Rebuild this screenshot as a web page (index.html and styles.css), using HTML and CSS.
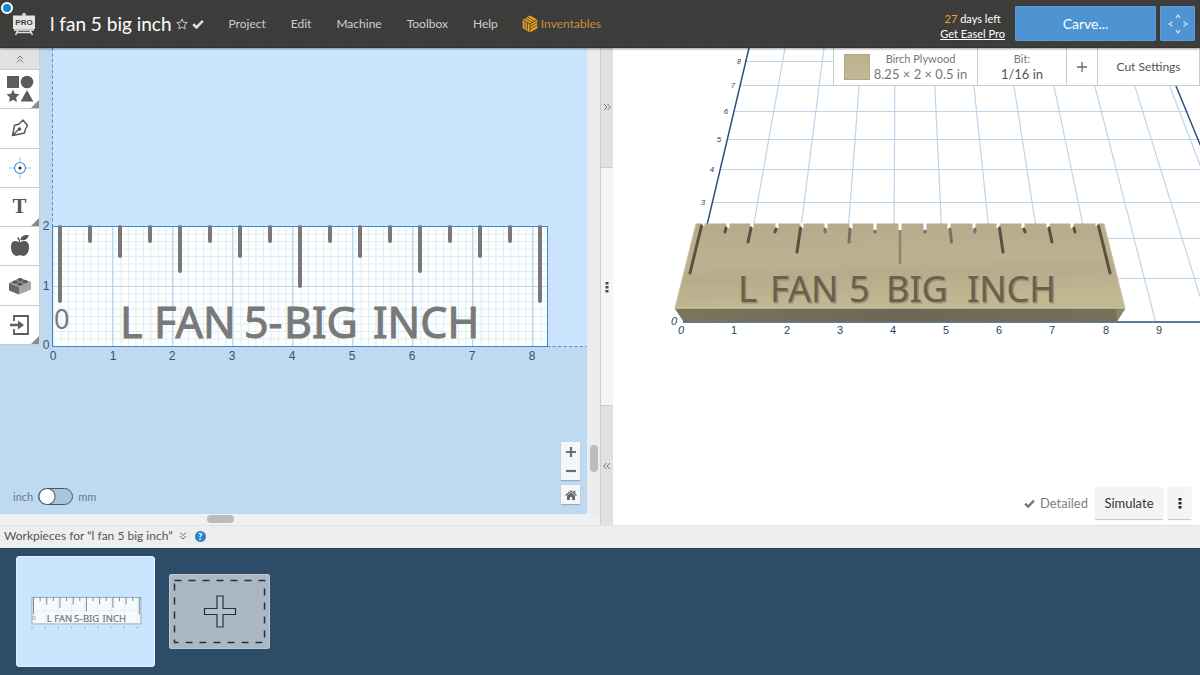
FILE: index.html
```html
<!DOCTYPE html>
<html lang="en">
<head>
<meta charset="utf-8">
<meta name="viewport" content="width=device-width, initial-scale=1">
<title>l fan 5 big inch</title>
<link rel="stylesheet" href="styles.css">
</head>
<body>
<header class="topbar">
  <span class="status-dot"></span>
  <a class="logo" href="#" aria-label="Home">
    <svg width="24" height="24" viewBox="0 0 24 24"><path d="M11 4V2.500a1 1 0 0 1 2 0V4M6 18l-2.500 5M18 18l2.500 5M5 20.500h14" fill="none" stroke="#e2e2e2" stroke-width="1.600"/><rect x="1" y="3.500" width="22" height="13.500" fill="#e4e4e2"/><path d="M2 18h20" stroke="#e2e2e2" stroke-width="1.600"/><text x="12" y="12.500" class="logo-text" text-anchor="middle">PRO</text></svg>
  </a>
  <h1 class="title">l fan 5 big inch</h1>
  <div class="title-icons">
    <svg width="12" height="12" viewBox="0 0 12 12"><path d="M6 .9l1.500 3.400 3.700.4-2.800 2.500.8 3.700L6 9 2.800 10.900l.8-3.700L.8 4.700l3.700-.4z" fill="none" stroke="#c8c8c8" stroke-width="1"/></svg>
    <svg width="12" height="12" viewBox="0 0 12 12"><path d="M1.200 6.200l3.300 3.200 6.300-6.500" fill="none" stroke="#ddd" stroke-width="2.600"/></svg>
  </div>
  <nav class="menu">
    <a href="#">Project</a><a href="#">Edit</a><a href="#">Machine</a><a href="#">Toolbox</a><a href="#">Help</a>
    <a href="#" class="inventables"><svg width="16" height="18" viewBox="0 0 16 18"><path d="M8 .5l7.300 4.200v8.600L8 17.500.7 13.300V4.700z" fill="#eea320"/><path d="M8 9v8.500M8 9L.7 4.700M8 9l7.300-4.300M3 3.400l7.300 4.200M5.300 2l7.300 4.200M3 6.500v7.500M5.400 7.800v7.500M8 11.500l7-4M8 14.200l7-4" fill="none" stroke="#4b4230" stroke-width=".9"/></svg>Inventables</a>
  </nav>
  <div class="trial"><span><b>27</b> days left</span><a href="#">Get Easel Pro</a></div>
  <button class="btn-carve" type="button">Carve...</button>
  <button class="btn-jog" type="button" aria-label="Jog machine"><svg width="20" height="20" viewBox="0 0 20 20"><path d="M8 4l2-3 2 3M8 16l2 3 2-3M4.500 7.800L1 10l3.500 2.200M15.500 7.800L19 10l-3.500 2.200" fill="none" stroke="#d5e9fa" stroke-width="1.200"/></svg></button>
</header>

<main class="workspace">
  <section class="editor">
    <div class="canvas">
      <svg class="canvas-art" width="100%" height="100%">
        <defs>
          <pattern id="minor" x="53" y="226" width="7.500" height="7.500" patternUnits="userSpaceOnUse"><path d="M0 .5H7.500M.5 0V7.500" stroke="#dfedf4" stroke-width="1"/></pattern>
          <g id="ruler">
            <g stroke="#797979" stroke-width="4" stroke-linecap="round">
              <path d="M60 227V301M540 227V301M300 227V286M180 227V271M420 227V271M120 227V256M240 227V256M360 227V256M480 227V256"/>
              <path d="M90 227V241M150 227V241M210 227V241M270 227V241M330 227V241M390 227V241M450 227V241M510 227V241"/>
            </g>
            <g class="engraving">
              <text x="54" y="329" class="engraving-zero">0</text>
              <text y="338"><tspan x="120">L</tspan><tspan x="154">FAN</tspan><tspan x="244">5-</tspan><tspan x="284">BIG</tspan><tspan x="373">INCH</tspan></text>
            </g>
          </g>
        </defs>
        <g transform="translate(0 -48)">
          <rect x="53" y="48" width="100%" height="298" fill="#cce5fe"/>
          <rect x="53" y="226" width="494" height="120" fill="#fdfefe"/>
          <rect x="53" y="226" width="494" height="120" fill="url(#minor)"/>
          <path d="M112.500 227V346M172.500 227V346M232.500 227V346M292.500 227V346M352.500 227V346M412.500 227V346M472.500 227V346M532.500 227V346M53 286.500H547" stroke="#bcd8ef"/>
          <path d="M52.500 48V226M547 346.500H2000" stroke="#4c93d6" stroke-dasharray="3 2.500"/>
          <rect x="52.500" y="226.500" width="495" height="120" fill="none" stroke="#3d87cb"/>
          <use href="#ruler"/>
          <g class="axis" text-anchor="middle">
            <text x="53" y="360">0</text><text x="113" y="360">1</text><text x="172" y="360">2</text><text x="232" y="360">3</text><text x="292" y="360">4</text><text x="352" y="360">5</text><text x="412" y="360">6</text><text x="472" y="360">7</text><text x="532" y="360">8</text>
            <text x="46" y="230">2</text><text x="46" y="290">1</text><text x="46" y="349">0</text>
          </g>
        </g>
      </svg>
      <div class="toolbar">
        <button class="tool-collapse" type="button" aria-label="Collapse"><svg width="8" height="8" viewBox="0 0 8 8"><path d="M1 4l3-3 3 3M1 7.500l3-3 3 3" fill="none" stroke="#777"/></svg></button>
        <button class="tool more" type="button" aria-label="Shapes"><svg width="28" height="28" viewBox="0 0 28 28" fill="#5c5c5c"><path d="M1 1h12v12H1z"/><circle cx="21" cy="7" r="6.300"/><path d="M7 14.500l1.900 4.300 4.600.5-3.400 3.100.9 4.600-4-2.300L3 27l.9-4.600L.5 19.300l4.600-.5zM21 15l6.300 11.500H14.700z"/></svg></button>
        <button class="tool" type="button" aria-label="Pen"><svg width="18" height="18" viewBox="0 0 18 18"><path d="M1.500 16.500L3.500 6.500 8 5l4-4 4.500 5.500-2 3.500-1 4zM1.500 16.500l6-6" fill="none" stroke="#555" stroke-width="1.400" stroke-linejoin="round"/><circle cx="8.500" cy="10" r="1.800" fill="#555"/></svg></button>
        <button class="tool" type="button" aria-label="Drill"><svg width="22" height="22" viewBox="0 0 22 22"><path d="M0 11h6M16 11h6M11 0v6M11 16v6" stroke="#9cc4ec"/><circle cx="11" cy="11" r="5.500" fill="#fff" stroke="#4a92dc" stroke-width="1.200"/><circle cx="11" cy="11" r="1.500" fill="#222"/></svg></button>
        <button class="tool tool-text more" type="button">T</button>
        <button class="tool" type="button" aria-label="Icons"><svg width="20" height="26" viewBox="0 0 22 26" fill="#585858"><path d="M10 9C4 5 1 9 1 14c0 5 3 10 6.500 10 1.500 0 2-.8 3.500-.8s2 .8 3.500.8C18 24 21 19 21 14c0-5-4-8.500-9-5.300z"/><path d="M10 9.500C10 7 9 5.500 7.500 4.500L9 3.500c1.500 1 2 2.500 2.200 5zM11.500 6.500C12 2 15 .5 20.500.8 20 5 16.500 7.500 11.500 6.500z"/></svg></button>
        <button class="tool" type="button" aria-label="Apps"><svg width="24" height="18" viewBox="0 0 24 18"><path d="M1 6L12 1l11 4-11 5z" fill="#8e8e8e"/><path d="M1 6l10 4v7.500L1 13.500z" fill="#666"/><path d="M11 10l12-5v7.500l-12 5z" fill="#a5a5a5"/><g fill="#555"><ellipse cx="7" cy="5" rx="2.600" ry="1.600"/><ellipse cx="12" cy="2.500" rx="2.600" ry="1.600"/><ellipse cx="12" cy="7" rx="2.600" ry="1.600"/><ellipse cx="17" cy="4.500" rx="2.600" ry="1.600"/></g></svg></button>
        <button class="tool more" type="button" aria-label="Import"><svg width="20" height="20" viewBox="0 0 20 20"><path d="M4 6V1h14v18H4v-5" fill="none" stroke="#5c5c5c" stroke-width="1.800"/><path d="M0 8.700h8V5.500L14 10l-6 4.500v-3.200H0z" fill="#5c5c5c"/></svg></button>
      </div>
      <label class="units"><span>inch</span><input type="checkbox" class="switch"><span>mm</span></label>
      <div class="zoom">
        <div class="zoom-pair">
          <button type="button" aria-label="Zoom in"><svg width="10" height="10" viewBox="0 0 10 10"><path d="M0 5h10M5 0v10" stroke="#6d6d6d" stroke-width="2.200"/></svg></button>
          <button type="button" aria-label="Zoom out"><svg width="10" height="10" viewBox="0 0 10 10"><path d="M0 5h10" stroke="#6d6d6d" stroke-width="2.200"/></svg></button>
        </div>
        <button class="zoom-home" type="button" aria-label="Fit"><svg width="12" height="10" viewBox="0 0 12 10"><path d="M.5 5.500L6 1l5.500 4.500" fill="none" stroke="#666" stroke-width="1.200"/><path d="M2 5.700L6 2.400l4 3.300V10H7.200V7H4.800v3H2zM8.700.8h1.600v3L8.700 2.500z" fill="#666"/></svg></button>
      </div>
    </div>
    <div class="vtrack"><span class="thumb"></span></div>
    <div class="htrack"><span class="thumb"></span></div>
  </section>

  <div class="splitter">
    <button class="split-end split-right" type="button" aria-label="Expand editor"><svg width="8" height="8" viewBox="0 0 8 8"><path d="M1 1l3 3-3 3M4.500 1l3 3-3 3" fill="none" stroke="#777"/></svg></button>
    <div class="split-grip"><svg width="4" height="12" viewBox="0 0 4 12" fill="#4a4a4a"><path d="M.5 1h3v2.500h-3zM.5 5h3v2.500h-3zM.5 9h3v2.500h-3z"/></svg></div>
    <button class="split-end" type="button" aria-label="Expand preview"><svg width="8" height="8" viewBox="0 0 8 8"><path d="M3.500 1l-3 3 3 3M7 1L4 4l3 3" fill="none" stroke="#777"/></svg></button>
  </div>

  <section class="preview">
    <svg class="scene" viewBox="613 48 587 477" preserveAspectRatio="xMinYMin slice">
      <defs>
        <linearGradient id="wood" x1="0" y1="0" x2="0.150" y2="1"><stop offset="0" stop-color="#b7aa8a"/><stop offset=".5" stop-color="#bdb191"/><stop offset=".65" stop-color="#b8ab8c"/><stop offset="1" stop-color="#c0b893"/></linearGradient>
        <linearGradient id="front" x1="0" y1="0" x2="1" y2="0"><stop offset="0" stop-color="#7b755d"/><stop offset=".5" stop-color="#6c6754"/><stop offset="1" stop-color="#77705a"/></linearGradient>
      </defs>
      <g fill="none" stroke="#bdd5ea" stroke-width="1.200">
        <path d="M746 61.500H1200M740 85.500H1200M734 111.500H1189M727 139.500H1200M720 169.500H1200M712 202.500H1200M704 238.500H1200M694 278.500H1200"/>
        <path d="M736.400 322L785 48M788.800 322L824 48M841.200 322L862 48M893.600 322L895 48M946 322L933 48M998.400 322L970 48M1050.800 322L1008 48M1103.200 322L1046 48M1155.600 322L1085 48M1208 322L1123 48M1260.400 322L1155 48"/>
      </g>
      <path d="M684 322L749 48M1160 48L1176 86L1206 159M683 322H1200" fill="none" stroke="#294f7a" stroke-width="1.500"/>
      <path d="M675 307h450v2l-8 12.500H683.500L675 309z" fill="url(#front)"/>
      <path d="M696 223.500h408L1125 308H675z" fill="url(#wood)"/>
      <path d="M1125 308l-8 13.500-1-13.500z" fill="#8b8468"/>
      <path d="M675 308H1125" stroke="#cbc29d" stroke-width="1.500"/>
      <path d="M696 223.500L675 308M1104 223.500L1125 308" stroke="#ccc4a5"/>
      <path d="M728 223V228M752 223V228M777 223V228M802 223V228M826 223V229M851 223V229M875 223V230M900 223V230M925 223V230M949 223V229M974 223V229M998 223V228M1023 223V228M1048 223V228M1072 223V228" stroke="#fff" stroke-width="3"/>
      <path d="M703.500 223v3M1096.500 223v3" stroke="#fff" stroke-width="2"/>
      <g stroke="#5c503e" stroke-width="3" stroke-linecap="round">
        <path d="M701.500 226L690 273M1098.500 226L1110 273M800.500 228L797 252M999.500 228L1003 252M751 228L748 242M1049 228L1052 242M726 228L725 232M776 229L775 232M1024 229L1025 232M1074 228L1075 232"/>
      </g>
      <g stroke="#7c705a" stroke-width="3" stroke-linecap="round"><path d="M850 229L849 242M950 229L951.500 242M825 229V232M875 231V232M925 231V232M975 229V232"/></g>
      <path d="M900 230V264" stroke="#908468" stroke-width="2.500"/>
      <g class="carved">
        <text y="303" class="carved-light"><tspan x="739">L</tspan><tspan x="771">FAN</tspan><tspan x="850">5</tspan><tspan x="887">BIG</tspan><tspan x="968">INCH</tspan></text>
        <text y="302"><tspan x="738">L</tspan><tspan x="770">FAN</tspan><tspan x="849">5</tspan><tspan x="886">BIG</tspan><tspan x="967">INCH</tspan></text>
      </g>
      <g class="scene-axis" text-anchor="middle">
        <text x="681" y="334" class="slant">0</text><text x="734" y="334">1</text><text x="787" y="334">2</text><text x="840" y="334">3</text><text x="893" y="334">4</text><text x="946" y="334">5</text><text x="999" y="334">6</text><text x="1052" y="334">7</text><text x="1106" y="334">8</text><text x="1159" y="334">9</text>
        <text x="674" y="325" class="slant">0</text>
        <g class="slant far"><text x="703" y="205">3</text><text x="712" y="172">4</text><text x="719" y="142">5</text><text x="726" y="114">6</text></g>
        <g class="slant farthest"><text x="733" y="88">7</text><text x="739" y="64">8</text></g>
      </g>
    </svg>
    <div class="setup">
      <button class="setup-material" type="button"><span class="swatch"></span><span class="stack"><small>Birch Plywood</small><span>8.25 × 2 × 0.5 in</span></span></button>
      <button class="setup-bit" type="button"><span class="stack"><small>Bit:</small><span>1/16 in</span></span></button>
      <button class="setup-add" type="button" aria-label="Add bit"><svg width="10" height="10" viewBox="0 0 10 10"><path d="M0 5h10M5 0v10" stroke="#666" stroke-width="1.300"/></svg></button>
      <button class="setup-cut" type="button">Cut Settings</button>
    </div>
    <div class="sim">
      <button class="detailed" type="button"><svg width="11" height="11" viewBox="0 0 12 12"><path d="M1.200 6.200l3.300 3.200 6.300-6.500" fill="none" stroke="#777" stroke-width="2.500"/></svg>Detailed</button>
      <button class="simulate" type="button">Simulate</button>
      <button class="kebab" type="button" aria-label="More"><svg width="4" height="12" viewBox="0 0 4 12" fill="#222"><path d="M.5 1h3v2.500h-3zM.5 5h3v2.500h-3zM.5 9h3v2.500h-3z"/></svg></button>
    </div>
  </section>
</main>

<section class="workpieces">
  <div class="workpieces-bar">
    <span>Workpieces for “l fan 5 big inch”</span>
    <svg width="8" height="8" viewBox="0 0 8 8"><path d="M1 .5l3 3 3-3M1 4l3 3 3-3" fill="none" stroke="#666"/></svg>
    <button class="help" type="button">?</button>
  </div>
  <div class="tray">
    <button class="piece" type="button" aria-label="l fan 5 big inch">
      <svg width="112" height="36" viewBox="44 206 508 163">
        <rect x="53" y="226" width="494" height="120" fill="#f5fafd" stroke="#98b4c9" stroke-width="5"/>
        <path d="M53 286H547M113 230V346M172 230V346M232 230V346M292 230V346M352 230V346M412 230V346M472 230V346M532 230V346" stroke="#dce8f0" stroke-width="3"/>
        <path d="M53 358v8M113 358v8M172 358v8M232 358v8M292 358v8M352 358v8M412 358v8M472 358v8M532 358v8" stroke="#8fa5b8" stroke-width="5"/>
        <use href="#ruler"/>
      </svg>
    </button>
    <button class="piece-add" type="button" aria-label="Add workpiece">
      <svg viewBox="0 0 101 75" width="101" height="75"><rect x="5.500" y="6.500" width="90" height="62" fill="none" stroke="#1e3247" stroke-width="1.500" stroke-dasharray="7 7"/><path d="M48 22h6v12.500h12.500v6H54V53h-6V40.500H35.500v-6H48z" fill="#b3c0cc" stroke="#1c3045" stroke-width="1.200"/></svg>
    </button>
  </div>
</section>
</body>
</html>
```

FILE: styles.css
```css
* { box-sizing: border-box; }
body {
  margin: 0;
  min-height: 100vh;
  display: flex;
  flex-direction: column;
  font-family: Lato, sans-serif;
  font-size: 13px;
  line-height: 16px;
  color: #555;
}
button {
  font: inherit;
  color: inherit;
  border: 0;
  padding: 0;
  margin: 0;
  background: none;
  display: flex;
  align-items: center;
  justify-content: center;
}
a { color: inherit; text-decoration: none; }
svg { display: block; flex: none; }

.topbar {
  position: relative;
  z-index: 2;
  display: flex;
  align-items: center;
  height: 48px;
  padding: 0 5px 0 12px;
  color: #cdcdcd;
  background: repeating-linear-gradient(-60deg, #3d3e3c 0 12px, #3c3d3b 12px 24px);
  border-bottom: 1px solid #343533;
  box-shadow: 0 1px 2px rgba(0, 0, 0, .4);
}
.status-dot {
  position: absolute;
  left: 1px;
  top: 2px;
  width: 12px;
  height: 12px;
  border: 2px solid #fff;
  border-radius: 50%;
  background: #0a8ad6;
}
.logo-text { font: 700 8px "Liberation Sans", sans-serif; fill: #3d3e3c; }
.title { margin: 0 0 0 14px; font-size: 19px; line-height: 24px; font-weight: 400; color: #fff; }
.title-icons { display: flex; gap: 4px; margin-left: 4px; }
.menu { display: flex; align-items: center; gap: 25px; margin-left: 25px; font-size: 12px; }
.inventables { display: flex; align-items: center; gap: 3px; margin-left: -1px; color: #c88f38; }
.trial {
  display: flex;
  flex-direction: column;
  align-items: center;
  margin-left: auto;
  padding-top: 4px;
  font-size: 11px;
  line-height: 15px;
  color: #fff;
}
.trial b { font-weight: 400; color: #e8a33c; }
.trial a { text-decoration: underline; }
.btn-carve, .btn-jog {
  height: 35px;
  border-radius: 2px;
  color: #fff;
  background: #4f94d2;
  box-shadow: inset 0 0 0 1px #5b9dd8;
}
.btn-carve { width: 141px; margin-left: 10px; font-size: 14px; }
.btn-jog { width: 35px; margin-left: 4px; }

.workspace { flex: 1; display: flex; min-height: 477px; }
.editor {
  flex: 600 1 0;
  min-width: 0;
  display: grid;
  grid-template: 1fr 11px / 1fr 13px;
  background: #f0f0f1;
}
.canvas { position: relative; overflow: hidden; background: #bfd9f1; }
.canvas-art { position: absolute; inset: 0; }
.engraving { font: 43px "Noto Sans", sans-serif; fill: #797979; stroke: #797979; stroke-width: 1px; }
.engraving-zero { font-size: 27px; stroke: none; }
.axis { font: 12px "Liberation Sans", sans-serif; fill: #2f5478; }

.toolbar {
  position: relative;
  display: flex;
  flex-direction: column;
  width: 40px;
  height: 297px;
  border-right: 1px solid #c9d2da;
  background: #fff;
}
.tool-collapse { height: 21px; background: #e2e2e2; }
.tool {
  position: relative;
  flex: 1;
  border-top: 1px solid #ccc;
}
.toolbar .tool:last-child { border-bottom: 1px solid #ccc; }
.more::after {
  content: "";
  position: absolute;
  right: 0;
  bottom: 0;
  border: solid transparent;
  border-width: 8px 0 0 8px;
  border-bottom: 8px solid #8b8b8b;
  border-top: 0;
}
.tool-text { font: 700 21px "Liberation Serif", serif; }

.units {
  position: absolute;
  left: 13px;
  bottom: 9px;
  display: flex;
  align-items: center;
  gap: 5px;
  font-size: 11px;
  color: #6b7b8a;
}
.switch {
  appearance: none;
  width: 35px;
  height: 17px;
  margin: 0;
  border: 1px solid #44596d;
  border-radius: 9px;
  background: radial-gradient(circle at 8px 50%, #fff 7px, #44596d 8px, #a9c4da 9px);
}
.zoom {
  position: absolute;
  right: 7px;
  bottom: 10px;
  width: 19px;
  display: flex;
  flex-direction: column;
  gap: 5px;
}
.zoom-pair, .zoom-home { background: #f5f6f7; box-shadow: 0 1px 1px rgba(0, 0, 0, .2); }
.zoom button { width: 100%; height: 19px; }

.vtrack { display: flex; flex-direction: column; align-items: center; background: #ebecee; }
.htrack { grid-column: 1 / 3; display: flex; background: #f0f0f1; }
.thumb { border-radius: 4px; background: #bcbcbc; }
.vtrack .thumb { width: 8px; height: 27px; }
.vtrack::before, .vtrack::after, .htrack::before, .htrack::after { content: ""; }
.vtrack::before { flex: 397; }
.vtrack::after { flex: 42; }
.htrack .thumb { width: 27px; height: 8px; margin-top: 1px; }
.htrack::before { flex: 207; }
.htrack::after { flex: 366; }

.splitter {
  width: 13px;
  display: flex;
  flex-direction: column;
  border-left: 1px solid #ccc;
}
.split-end { flex: 1; background: #e1e1e1; }
.split-grip { flex: 2; display: flex; align-items: center; justify-content: center; background: #f5f5f6; border: solid #ccc; border-width: 1px 0; }

.preview { position: relative; flex: 587 1 0; min-width: 0; overflow: hidden; background: #fff; }
.scene { position: absolute; inset: 0; width: 100%; height: 100%; }
.carved { font: 36px "Noto Sans", sans-serif; fill: #6b604c; }
.carved-light { fill: #9d9072; stroke: #9d9072; stroke-width: 1px; }
.scene-axis { font: 11px "Liberation Sans", sans-serif; fill: #333f55; }
.slant { font-style: italic; }
.far { font-size: 8px; }
.farthest { font-size: 7px; }

.setup {
  position: absolute;
  top: 0;
  right: 0;
  display: flex;
  height: 38px;
  background: #fff;
  border: 1px solid #ccc;
  border-top: 0;
  color: #555;
}
.setup button + button { border-left: 1px solid #ccc; }
.setup-material { width: 143px; gap: 4px; color: #777; }
.swatch { width: 26px; height: 26px; background: linear-gradient(#bcb08e, #c3b995); border: 1px solid #b0a684; }
.stack { display: flex; flex-direction: column; align-items: center; }
.stack small { font-size: 11px; line-height: 15px; color: #777; }
.setup-bit { width: 89px; }
.setup-add { width: 31px; }
.setup-cut { width: 102px; font-size: 12px; }

.sim { position: absolute; right: 9px; bottom: 6px; display: flex; align-items: center; gap: 5px; }
.detailed { gap: 5px; margin-right: 2px; color: #808080; }
.simulate, .kebab { height: 32px; background: #f4f4f4; box-shadow: 0 1px 1px rgba(0, 0, 0, .2); }
.simulate { width: 68px; color: #333; }
.kebab { width: 23px; }

.workpieces-bar {
  display: flex;
  align-items: center;
  height: 23px;
  padding: 0 4px 2px;
  background: #eee;
  border-top: 1px solid #e2e2e2;
  font-size: 12px;
}
.workpieces-bar svg { margin: 0 8px 0 6px; }
.help {
  width: 11px;
  height: 11px;
  border-radius: 50%;
  background: #3381c4;
  color: #fff;
  font-size: 9px;
  font-weight: 900;
  line-height: 11px;
}
.tray {
  display: flex;
  align-items: center;
  gap: 14px;
  height: 127px;
  padding: 0 16px 2px;
  background: #2d4c67;
  border-top: 1px solid #20405c;
}
.piece { width: 139px; height: 111px; border-radius: 3px; background: #cce5fe; border: 1px solid #e2f0ff; }
.piece-add { width: 101px; height: 75px; border-radius: 3px; background: #abb8c4; box-shadow: inset 0 0 0 1px #bcc7d1; }
```
